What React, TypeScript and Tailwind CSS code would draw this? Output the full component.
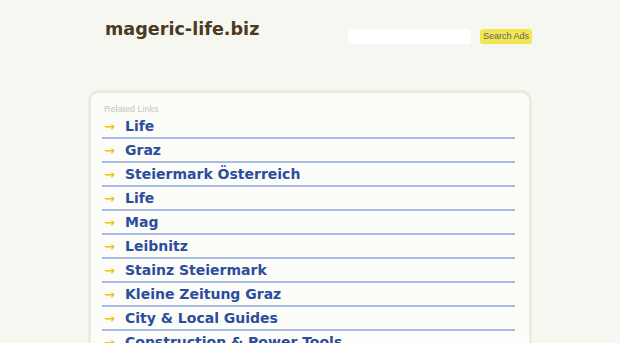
import React from "react";

const links = [
  "Life",
  "Graz",
  "Steiermark Österreich",
  "Life",
  "Mag",
  "Leibnitz",
  "Stainz Steiermark",
  "Kleine Zeitung Graz",
  "City & Local Guides",
  "Construction & Power Tools",
];

export default function App() {
  return (
    <div className="w-[620px] h-[343px] overflow-hidden bg-[#f7f7f2]" style={{ fontFamily: '"DejaVu Sans", sans-serif' }}>
      <div className="flex items-start h-[90px]">
        <div className="ml-[105px] mt-[17px] text-[17.6px] font-bold text-[#4b3a22] leading-[24px]">mageric-life.biz</div>
        <div className="ml-auto mr-[88px] mt-[29px] flex items-center gap-[9px]">
          <div className="w-[123px] h-[15px] bg-white rounded-[3px]" />
          <div className="w-[52px] h-[15px] bg-[#f2e650] rounded-[3px] text-[9px] leading-[15px] text-center text-[#5f6473]" style={{ fontFamily: '"Liberation Sans", sans-serif' }}>Search Ads</div>
        </div>
      </div>
      <div className="ml-[88px] w-[444px] border-[3px] border-[#ebecdf] rounded-[11px] bg-[#fcfcf9] pl-[11px] pr-[14px] pt-[10px] pb-[20px]">
        <div className="text-[9px] leading-[12px] text-[#c4c4c4] pl-[2px]" style={{ fontFamily: '"Liberation Sans", sans-serif' }}>Related Links</div>
        <div>
          {links.map((l, i) => (
            <div key={i} className="h-[24px] border-b-2 border-[#a9bbe2] flex items-center">
              <span className="w-[23px] pl-[2px] text-[13px] font-bold text-[#f2c41c] leading-none">→</span>
              <span className="text-[14px] font-bold text-[#2c4d9c] leading-none">{l}</span>
            </div>
          ))}
        </div>
      </div>
    </div>
  );
}
